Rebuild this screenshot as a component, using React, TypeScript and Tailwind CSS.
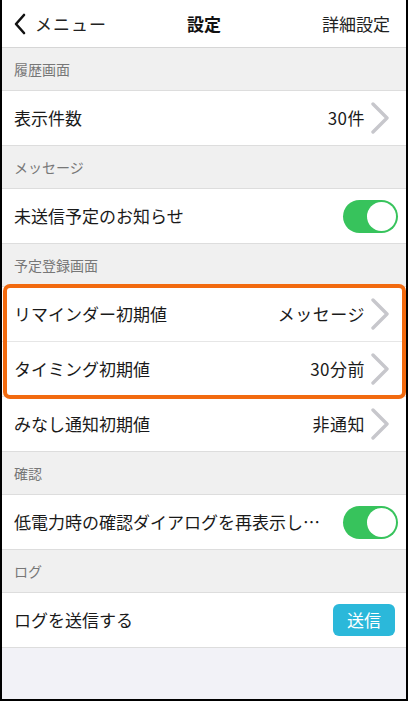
import React from 'react';

const font = { fontFamily: '"Noto Sans CJK JP", "Noto Sans", sans-serif' };

const Chevron = () => (
  <svg width="20" height="32" viewBox="0 0 20 32" className="ml-[5px] mr-[8px] shrink-0">
    <path d="M3 2 L17 16 L3 30" fill="none" stroke="#c7c7cc" strokeWidth="3.4" strokeLinecap="round" strokeLinejoin="round" />
  </svg>
);

const Toggle = () => (
  <div className="w-[55px] h-[33px] rounded-full bg-[#37c35c] relative shrink-0">
    <div className="absolute right-[2px] top-[2px] w-[29px] h-[29px] rounded-full bg-white" />
  </div>
);

const Section = ({ title }: { title: string }) => (
  <div className="h-[43px] bg-[#f0f0f0] border-b border-[#dddddd] flex items-end pb-[10px] px-[12px] text-[14px] text-[#777777]">
    {title}
  </div>
);

const Row = ({
  label,
  value,
  right,
  last,
}: {
  label: string;
  value?: string;
  right?: React.ReactNode;
  last?: boolean;
}) => (
  <div className={`h-[55px] bg-white flex items-center pl-[12px] pr-[8px] ${last ? 'border-b border-[#dddddd]' : 'border-b border-[#e6e6e6]'}`}>
    <span className="flex-1 text-[17px] text-[#1a1a1a] truncate pr-3">{label}</span>
    {value && <span className="text-[17px] text-[#1a1a1a] tracking-[0.5px]">{value}</span>}
    {right}
  </div>
);

export default function App() {
  return (
    <div style={font} className="w-[408px] h-[701px] overflow-hidden bg-[#f2f2f7] border-l-2 border-r-2 border-b-2 border-black">
      {/* Header */}
      <div className="h-[48px] bg-white border-b border-[#d6d6d6] flex items-center px-[10px] relative">
        <div className="flex items-center gap-[7px]">
          <svg width="16" height="22" viewBox="0 0 16 22">
            <path d="M12 2 L4 11 L12 20" fill="none" stroke="#111" strokeWidth="2.6" strokeLinecap="round" strokeLinejoin="round" />
          </svg>
          <span className="text-[17px] text-[#222] tracking-[1px]">メニュー</span>
        </div>
        <span className="absolute left-1/2 -translate-x-1/2 text-[17px] font-bold text-[#111]">設定</span>
        <span className="ml-auto text-[17px] text-[#222] mr-[6px]">詳細設定</span>
      </div>

      <Section title="履歴画面" />
      <Row label="表示件数" value="30件" right={<Chevron />} last />

      <Section title="メッセージ" />
      <Row label="未送信予定のお知らせ" right={<Toggle />} last />

      <Section title="予定登録画面" />
      <div className="relative">
        <Row label="リマインダー初期値" value="メッセージ" right={<Chevron />} />
        <Row label="タイミング初期値" value="30分前" right={<Chevron />} />
        <div className="absolute left-[1px] right-[0px] top-[-3px] bottom-[-2px] border-[4px] border-[#f26a0f] rounded-[7px] pointer-events-none" />
      </div>
      <Row label="みなし通知初期値" value="非通知" right={<Chevron />} last />

      <Section title="確認" />
      <Row label="低電力時の確認ダイアログを再表示しないようにする" right={<Toggle />} last />

      <Section title="ログ" />
      <Row
        label="ログを送信する"
        right={
          <button className="w-[62px] h-[32px] rounded-[6px] bg-[#2bb8da] text-white text-[17px] mr-[3px]">
            送信
          </button>
        }
        last
      />
    </div>
  );
}
